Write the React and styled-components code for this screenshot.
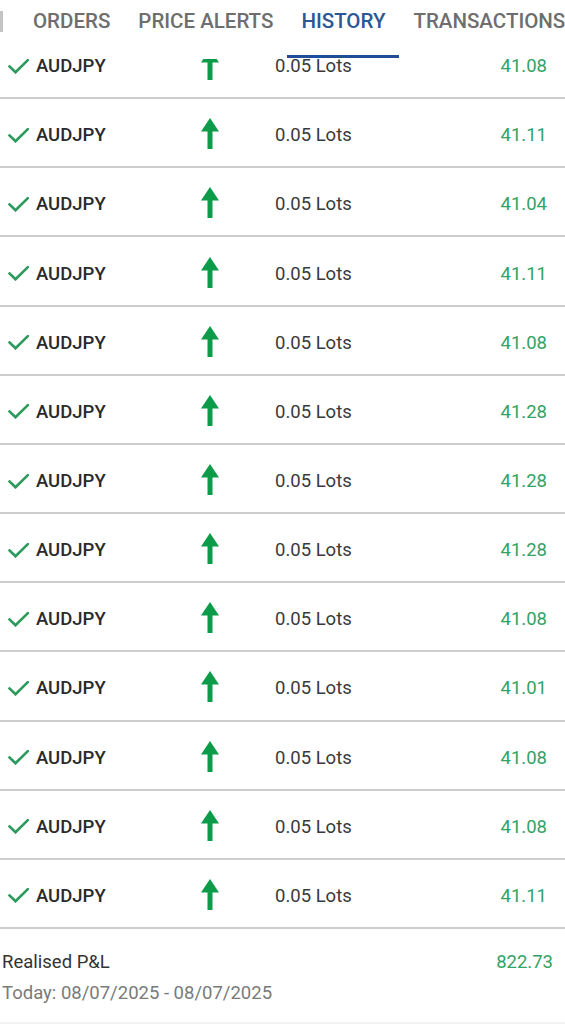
import styled, { createGlobalStyle } from 'styled-components';

const GlobalStyle = createGlobalStyle`
  html, body {
    margin: 0;
    padding: 0;
    background: #f3f3f3;
    overflow: hidden;
  }
  * {
    box-sizing: border-box;
  }
  body {
    font-family: Roboto, "Noto Sans", "Liberation Sans", sans-serif;
  }
`;

const tabs = ['ORDERS', 'PRICE ALERTS', 'HISTORY', 'TRANSACTIONS'];

const trades = [
  '41.08',
  '41.11',
  '41.04',
  '41.11',
  '41.08',
  '41.28',
  '41.28',
  '41.28',
  '41.08',
  '41.01',
  '41.08',
  '41.08',
  '41.11',
];

function CheckIcon() {
  return (
    <svg width="21" height="15" viewBox="0 0 21 15">
      <polyline
        points="1.5,7.5 7.5,13.3 19.8,1.2"
        fill="none"
        stroke="#2c9a5c"
        strokeWidth="2.6"
        strokeLinecap="square"
      />
    </svg>
  );
}

function UpArrow() {
  return (
    <svg width="18" height="31" viewBox="0 0 18 31">
      <polygon points="9,0 18,13.5 0,13.5" fill="#0c9b48" />
      <rect x="6.5" y="12" width="5" height="19" fill="#0c9b48" />
    </svg>
  );
}

function TradeRow({ price }) {
  return (
    <Row>
      <Symbol>
        <CheckIcon />
        <span>AUDJPY</span>
      </Symbol>
      <ArrowCell>
        <UpArrow />
      </ArrowCell>
      <Lots>0.05 Lots</Lots>
      <Price>{price}</Price>
    </Row>
  );
}

export default function App() {
  return (
    <>
      <GlobalStyle />
      <Page>
        <TabBar>
          <TabEdge />
          {tabs.map((t) => (
            <Tab key={t} active={t === 'HISTORY'}>
              {t}
            </Tab>
          ))}
        </TabBar>
        <List>
          {trades.map((p, i) => (
            <TradeRow key={i} price={p} />
          ))}
        </List>
        <Summary>
          <SummaryLine>
            <SummaryLabel>Realised P&amp;L</SummaryLabel>
            <SummaryValue>822.73</SummaryValue>
          </SummaryLine>
          <DateRange>Today: 08/07/2025 - 08/07/2025</DateRange>
        </Summary>
      </Page>
    </>
  );
}

const Page = styled.div`
  width: 565px;
  background: #ffffff;
  overflow: hidden;
`;

const TabBar = styled.div`
  position: relative;
  z-index: 1;
  display: flex;
  height: 59px;
  background: #ffffff;
  overflow: hidden;
  white-space: nowrap;
`;

const TabEdge = styled.div`
  flex: none;
  width: 3px;
  height: 21px;
  margin-top: 11px;
  margin-right: 16px;
  background: #c4c4c4;
`;

const Tab = styled.div`
  flex: none;
  height: 58px;
  padding: 9px 14px 0;
  font-size: 20.5px;
  line-height: 25px;
  font-weight: 500;
  color: ${({ active }) => (active ? '#2b5797' : '#6e6e6e')};
  border-bottom: 3px solid ${({ active }) => (active ? '#1f4e96' : 'transparent')};
`;

const List = styled.div`
  margin-top: -29px;
`;

const Row = styled.div`
  display: grid;
  grid-template-columns: 193px 74px 1fr auto;
  align-items: center;
  height: 69.17px;
  padding: 5px 18px 0 8px;
  border-bottom: 2px solid #cdcdcd;
  font-size: 18.5px;
  line-height: 24px;
`;

const Symbol = styled.div`
  display: flex;
  align-items: center;
  gap: 7px;
  font-weight: 500;
  color: #2a2a2a;

  svg {
    flex: none;
  }
`;

const ArrowCell = styled.div`
  display: flex;
  align-items: center;
  margin-top: -3px;
`;

const Lots = styled.div`
  color: #3a3a3a;
`;

const Price = styled.div`
  color: #33a266;
  text-align: right;
`;

const Summary = styled.div`
  display: flex;
  flex-direction: column;
  gap: 7px;
  padding: 21px 12px 17px 2px;
  font-size: 18.5px;
  line-height: 24px;
  background: #ffffff;
`;

const SummaryLine = styled.div`
  display: flex;
  justify-content: space-between;
`;

const SummaryLabel = styled.span`
  color: #333333;
`;

const SummaryValue = styled.span`
  color: #33a266;
`;

const DateRange = styled.div`
  color: #7a7a7a;
`;
